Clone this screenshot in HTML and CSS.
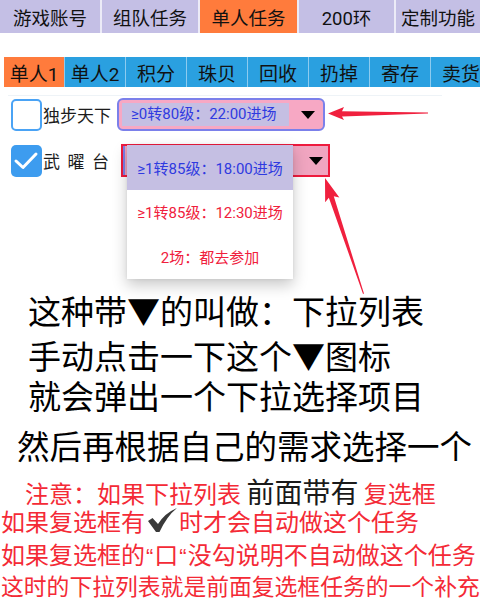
FILE: index.html
```html
<!DOCTYPE html>
<html lang="zh">
<head>
    <meta charset="UTF-8">
    <meta name="viewport" content="width=device-width, initial-scale=1.0">
    <title>单人任务</title>
    <link rel="stylesheet" href="styles.css">
</head>
<body>
    <div class="top-tabs">
        <div class="tab">游戏账号</div>
        <div class="tab">组队任务</div>
        <div class="tab active">单人任务</div>
        <div class="tab">200环</div>
        <div class="tab">定制功能</div>
    </div>

    <div class="sub-tabs">
        <div class="sub active">单人1</div>
        <div class="sub">单人2</div>
        <div class="sub">积分</div>
        <div class="sub">珠贝</div>
        <div class="sub">回收</div>
        <div class="sub">扔掉</div>
        <div class="sub">寄存</div>
        <div class="sub">卖货</div>
    </div>

    <div class="panel">
        <div class="row">
            <div class="check"></div>
            <div class="label">独步天下</div>
            <div class="select sel-a">
                <div class="value">≥0转80级：22:00进场</div>
                <div class="caret"></div>
            </div>
        </div>
        <div class="row row-b">
            <div class="check checked">
                <svg width="31" height="32" viewBox="0 0 31 32"><path d="M5 16 L12 22.5 L25 9" fill="none" stroke="#fff" stroke-width="3" stroke-linecap="round" stroke-linejoin="round"/></svg>
            </div>
            <div class="label spaced">武曜台</div>
            <div class="select sel-b">
                <div class="value"></div>
                <div class="caret"></div>
                <div class="popup">
                    <div class="opt current">≥1转85级：18:00进场</div>
                    <div class="opt">≥1转85级：12:30进场</div>
                    <div class="opt">2场：都去参加</div>
                </div>
            </div>
        </div>
    </div>

    <div class="explain">
        <p class="l1">这种带▼的叫做：下拉列表</p>
        <p class="l2">手动点击一下这个▼图标</p>
        <p class="l3">就会弹出一个下拉选择项目</p>
        <p class="l4">然后再根据自己的需求选择一个</p>
    </div>

    <div class="notes">
        <p class="n1">注意：如果下拉列表 <span class="dark">前面带有</span> 复选框</p>
        <p class="n2">如果复选框有<svg class="tick" width="31" height="26" viewBox="0 0 31 26"><path d="M1 13 L5.5 10 L11 16 Q18 5 30 0 Q20 8 12.5 24 L9 24 Z" fill="#3a3a3a"/></svg>时才会自动做这个任务</p>
        <p class="n3">如果复选框的<span class="q">“</span>口<span class="q">“</span>没勾说明不自动做这个任务</p>
        <p class="n4">这时的下拉列表就是前面复选框任务的一个补充</p>
    </div>

    <svg class="arrows" width="480" height="606" viewBox="0 0 480 606">
        <polygon points="328,113.5 344,107 342,111.3 428,112.6 428,113.6 342,116.5 344,120" fill="#f0203e"/>
        <g transform="translate(325,178) rotate(-18.4)">
            <polygon points="0,0 7.5,23 2.6,20 0.5,122 -0.5,122 -2.6,20 -7.5,23" fill="#f0203e"/>
        </g>
    </svg>
</body>
</html>
```

FILE: styles.css
```css
body {
    margin: 0;
    width: 480px;
    height: 606px;
    overflow: hidden;
    position: relative;
    background: #fff;
    font-family: Roboto, "Noto Sans CJK SC", sans-serif;
    color: #111;
}
p {
    margin: 0;
    white-space: nowrap;
}
.top-tabs {
    display: grid;
    grid-template-columns: 100px 96px 97px 95px 1fr;
    gap: 2px;
    height: 33px;
    background: #ecebf7;
}
.tab {
    background: #c4bfe5;
    display: flex;
    align-items: center;
    justify-content: center;
    font-size: 18.5px;
}
.tab.active {
    background: #ff7b3c;
}
.sub-tabs {
    display: flex;
    gap: 1px;
    margin: 24px 0 0 4px;
    height: 30px;
    overflow: hidden;
    background: #8dcbef;
}
.sub {
    flex: none;
    width: 60px;
    background: #2aa0e0;
    display: flex;
    align-items: center;
    justify-content: center;
    font-size: 19px;
    white-space: nowrap;
}
.sub.active {
    background: #ff7b3c;
}
.panel {
    margin: 8px 0 0 8px;
    width: 434px;
    border-top: 1px solid #eef3f7;
    padding-top: 2px;
}
.row {
    display: flex;
    align-items: center;
}
.row-b {
    margin-top: 13px;
}
.check {
    flex: none;
    width: 31px;
    height: 32px;
    box-sizing: border-box;
    margin-left: 3px;
    border: 2px solid #4aa3f5;
    border-radius: 5px;
    background: #fff;
}
.check.checked {
    border: none;
    background: #3d9cef;
}
.check svg {
    display: block;
}
.label {
    flex: none;
    width: 74px;
    padding-left: 1px;
    box-sizing: border-box;
    font-size: 17px;
    color: #1c1c1c;
    white-space: nowrap;
}
.label.spaced {
    letter-spacing: 7.5px;
}
.select {
    flex: none;
    position: relative;
    display: flex;
    align-items: center;
    box-sizing: border-box;
    background: #f7a8c4;
}
.sel-a {
    width: 208px;
    height: 33px;
    margin-left: 1px;
    border: 2px solid #7b80ea;
    border-radius: 6px;
    padding: 0 0 0 3px;
}
.sel-b {
    width: 209px;
    height: 33px;
    margin-left: 5px;
    border: 2px solid #ee1b3e;
    box-shadow: inset 2px 0 0 #7b80ea;
    background: #f0a5c0;
}
.value {
    flex: none;
    width: 167px;
    height: 23px;
    line-height: 23px;
    background: #c5bfe3;
    color: #2f3ae0;
    font-size: 15px;
    padding-left: 9px;
    box-sizing: border-box;
    white-space: nowrap;
}
.sel-b .value {
    background: transparent;
}
.caret {
    width: 0;
    height: 0;
    margin-left: 12px;
    border-left: 7px solid transparent;
    border-right: 7px solid transparent;
    border-top: 8px solid #000;
}
.sel-b .caret {
    margin-left: 19px;
}
.popup {
    position: absolute;
    left: 4px;
    top: -1px;
    width: 166px;
    background: #fff;
    box-shadow: 0 6px 14px rgba(0, 0, 0, 0.22), 0 0 3px rgba(0, 0, 0, 0.08);
    z-index: 2;
}
.opt {
    height: 44.5px;
    display: flex;
    align-items: center;
    justify-content: center;
    font-size: 15px;
    color: #f0203c;
    white-space: nowrap;
}
.opt.current {
    background: #c5bfe3;
    color: #2f3ae0;
}
.explain {
    margin-top: 113px;
    font-family: "Noto Sans CJK SC", sans-serif;
    font-size: 33px;
    line-height: 40px;
    color: #000;
}
.explain .l1,
.explain .l2,
.explain .l3 {
    padding-left: 28px;
}
.explain .l2 {
    margin-top: 5px;
}
.explain .l4 {
    margin-top: 10px;
    padding-left: 17px;
    font-size: 32.5px;
}
.notes {
    margin-top: 12px;
    font-family: "Noto Sans CJK SC", sans-serif;
    font-size: 24px;
    line-height: 28px;
    color: #f42a36;
}
.notes p {
    padding-left: 1px;
}
.notes .n1 {
    padding-left: 25px;
}
.notes .dark {
    color: #1a1a1a;
    font-size: 28px;
}
.notes .q {
    font-family: "Liberation Sans", sans-serif;
    font-size: 22px;
    padding: 0 1px;
}
.notes .n3 {
    margin-top: 5px;
}
.notes .n4 {
    margin-top: 1px;
    font-size: 22.8px;
}
.tick {
    vertical-align: -3px;
    margin: 0 1px 0 2px;
}
.arrows {
    position: absolute;
    left: 0;
    top: 0;
    pointer-events: none;
    z-index: 3;
}
```
